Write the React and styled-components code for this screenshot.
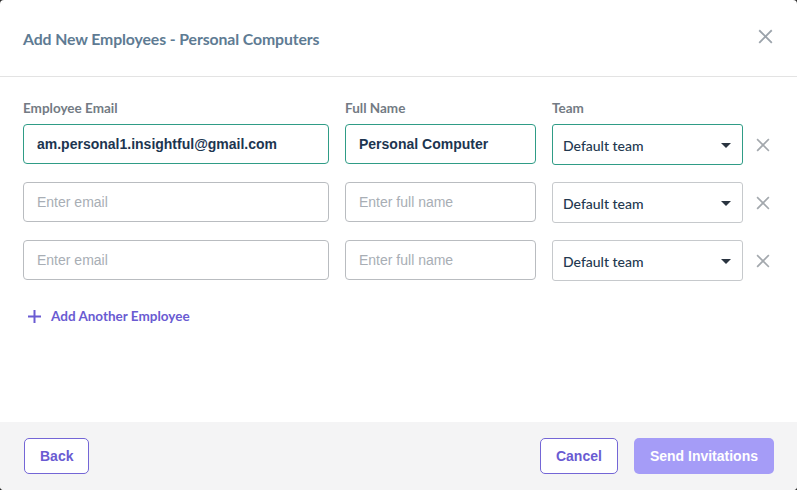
import styled, { createGlobalStyle } from "styled-components";

const GlobalStyle = createGlobalStyle`
  html, body {
    margin: 0;
    padding: 0;
    background: #2b2b2b;
  }
  * {
    box-sizing: border-box;
  }
`;

const rows = [
  { email: "am.personal1.insightful@gmail.com", name: "Personal Computer", filled: true },
  { email: "", name: "", filled: false },
  { email: "", name: "", filled: false },
];

function CloseIcon({ size = 16, color = "#9aa0a6" }) {
  return (
    <svg width={size} height={size} viewBox="0 0 16 16">
      <path d="M2 2 L14 14 M14 2 L2 14" stroke={color} strokeWidth="2" strokeLinecap="square" />
    </svg>
  );
}

function App() {
  return (
    <>
      <GlobalStyle />
      <Modal>
        <Header>
          <Title>Add New Employees - Personal Computers</Title>
          <IconButton>
            <CloseIcon size={15} color="#9ba3ab" />
          </IconButton>
        </Header>
        <Body>
          <Grid>
            <Label>Employee Email</Label>
            <Label>Full Name</Label>
            <Label>Team</Label>
            <span />
            {rows.map((r, i) => (
              <Row key={i}>
                <Input $filled={r.filled} defaultValue={r.email} placeholder="Enter email" />
                <Input $filled={r.filled} defaultValue={r.name} placeholder="Enter full name" />
                <Select $filled={r.filled}>
                  <span>Default team</span>
                  <Caret />
                </Select>
                <RemoveButton>
                  <CloseIcon size={14} color="#a3a8ad" />
                </RemoveButton>
              </Row>
            ))}
          </Grid>
          <AddLink>
            <svg width="15" height="15" viewBox="0 0 15 15">
              <path d="M7.5 1 V14 M1 7.5 H14" stroke="#6a5bd2" strokeWidth="2" />
            </svg>
            Add Another Employee
          </AddLink>
        </Body>
        <Footer>
          <OutlineButton>Back</OutlineButton>
          <FooterRight>
            <OutlineButton>Cancel</OutlineButton>
            <PrimaryButton disabled>Send Invitations</PrimaryButton>
          </FooterRight>
        </Footer>
      </Modal>
    </>
  );
}

const Modal = styled.div`
  width: 797px;
  height: 490px;
  background: #fff;
  border-radius: 4px;
  overflow: hidden;
  display: flex;
  flex-direction: column;
  font-family: "Source Sans Pro", Lato, "Noto Sans", sans-serif;
`;

const Header = styled.div`
  height: 77px;
  flex: none;
  display: flex;
  align-items: center;
  justify-content: space-between;
  padding: 0 24px 0 23px;
  border-bottom: 1px solid #e3e3e3;
`;

const Title = styled.h2`
  margin: 0;
  font-size: 15.8px;
  font-weight: 700;
  color: #5e7b93;
  letter-spacing: -0.1px;
`;

const IconButton = styled.button`
  border: none;
  background: none;
  padding: 0;
  display: flex;
  cursor: pointer;
  margin-top: -4px;
`;

const Body = styled.div`
  flex: 1;
  padding: 23px 23px 0 23px;
`;

const Grid = styled.div`
  display: grid;
  grid-template-columns: 306px 191px 191px 30px;
  column-gap: 16px;
  row-gap: 17px;
  align-items: start;
`;

const Row = styled.div`
  display: contents;
`;

const Label = styled.div`
  font-size: 13.5px;
  font-weight: 700;
  color: #737b84;
  margin-bottom: -9px;
  line-height: 16px;
`;

const Input = styled.input`
  height: 40px;
  width: 100%;
  border: 1px solid ${(p) => (p.$filled ? "#2f9c86" : "#b9bcc0")};
  border-radius: 4px;
  padding: 0 13px;
  font-family: "Liberation Sans", Arial, sans-serif;
  font-size: 14px;
  font-weight: 700;
  color: #1c3550;
  outline: none;
  background: #fff;
  &::placeholder {
    color: #a8aeb5;
    font-weight: 400;
  }
`;

const Select = styled.div`
  height: 41px;
  border: 1px solid ${(p) => (p.$filled ? "#2f9c86" : "#c6c9cc")};
  border-radius: 3px;
  padding: 1px 11px 0 10px;
  display: flex;
  align-items: center;
  justify-content: space-between;
  font-size: 14px;
  color: #23384f;
  font-weight: 500;
`;

const Caret = styled.span`
  width: 0;
  height: 0;
  border-left: 5px solid transparent;
  border-right: 5px solid transparent;
  border-top: 5px solid #2a3440;
`;

const RemoveButton = styled.button`
  border: none;
  background: none;
  padding: 0;
  margin-left: -3px;
  align-self: center;
  display: flex;
  cursor: pointer;
`;

const AddLink = styled.button`
  margin-top: 27px;
  margin-left: 4px;
  border: none;
  background: none;
  padding: 0;
  display: flex;
  align-items: center;
  gap: 9px;
  font-family: "Source Sans Pro", Lato, "Noto Sans", sans-serif;
  font-size: 13.5px;
  font-weight: 700;
  color: #6a5bd2;
  cursor: pointer;
`;

const Footer = styled.div`
  height: 68px;
  flex: none;
  background: #f4f4f5;
  display: flex;
  align-items: center;
  justify-content: space-between;
  padding: 0 23px 0 24px;
`;

const FooterRight = styled.div`
  display: flex;
  gap: 16px;
`;

const OutlineButton = styled.button`
  height: 36px;
  padding: 0 15px;
  border: 1px solid #7466d6;
  border-radius: 5px;
  background: #fff;
  color: #6a5bd2;
  font-family: "Liberation Sans", Arial, sans-serif;
  font-size: 14px;
  font-weight: 700;
  cursor: pointer;
`;

const PrimaryButton = styled.button`
  height: 36px;
  padding: 0 16px;
  border: none;
  border-radius: 5px;
  background: #a59cf7;
  color: #fff;
  font-family: "Liberation Sans", Arial, sans-serif;
  font-size: 14px;
  font-weight: 700;
`;

export default App;
